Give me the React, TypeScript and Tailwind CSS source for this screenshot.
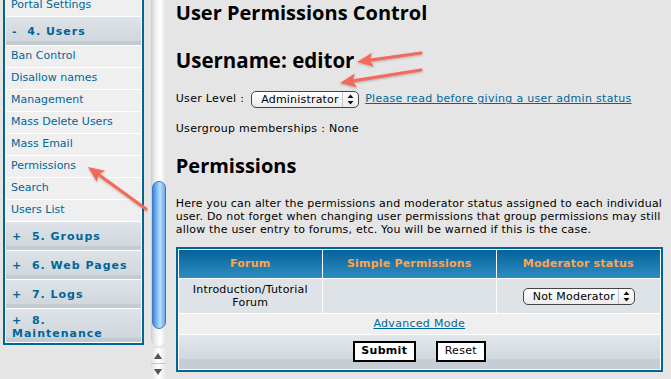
import React from "react";

const body = { fontFamily: '"DejaVu Sans", Verdana, sans-serif' };
const head = { fontFamily: '"Open Sans", "DejaVu Sans", sans-serif' };

function SideLink({ children }: { children: React.ReactNode }) {
  return (
    <div className="flex h-[21px] items-center bg-[#efefef] pl-[5px] text-[11px] text-[#006699]">
      {children}
    </div>
  );
}

function SideHead({ children, tall }: { children: React.ReactNode; tall?: boolean }) {
  return (
    <div
      className={`flex ${tall ? "h-[33px] items-start pt-[5px]" : "h-[28px] items-center"} bg-[linear-gradient(to_bottom,#dde3e8_0%,#d0d7dd_86%,#c3cbd2_87%,#c3cbd2_100%)] pl-[6px] pr-[2px] text-[11px] font-bold leading-[13px] tracking-[1px] text-[#006699] whitespace-pre-wrap`}
    >
      {children}
    </div>
  );
}

function UpDown() {
  return (
    <svg width="7" height="11" viewBox="0 0 7 11">
      <path d="M3.5 0.5 L6.5 4 L0.5 4 Z" fill="#111" />
      <path d="M0.5 7 L6.5 7 L3.5 10.5 Z" fill="#111" />
    </svg>
  );
}

function FakeSelect({ label, className }: { label: string; className: string }) {
  return (
    <div
      className={`flex h-[17px] items-stretch rounded-[5px] border border-[#444] bg-[linear-gradient(to_bottom,#ffffff,#ececec)] ${className}`}
    >
      <span className="flex flex-1 items-center pl-[9px] text-[11px] leading-none tracking-[0.2px] text-black">{label}</span>
      <span className="flex w-[16px] items-center justify-center border-l border-[#c4c4c4]">
        <UpDown />
      </span>
    </div>
  );
}

function Arrow({ x1, y1, x2, y2 }: { x1: number; y1: number; x2: number; y2: number }) {
  const dx = x2 - x1;
  const dy = y2 - y1;
  const len = Math.sqrt(dx * dx + dy * dy);
  const ux = dx / len;
  const uy = dy / len;
  const hl = 16;
  const hw = 7;
  const bx = x2 - ux * hl;
  const by = y2 - uy * hl;
  const px = -uy;
  const py = ux;
  const pts = `${x2},${y2} ${bx + px * hw},${by + py * hw} ${bx + ux * 3},${by + uy * 3} ${bx - px * hw},${by - py * hw}`;
  return (
    <g>
      <line x1={x1} y1={y1} x2={bx + ux * 4} y2={by + uy * 4} stroke="#f36b5d" strokeWidth="3.2" strokeLinecap="round" />
      <polygon points={pts} fill="#f36b5d" />
    </g>
  );
}

export default function App() {
  return (
    <div className="relative h-[379px] w-[671px] overflow-hidden bg-[#e5e5e5] text-black" style={body}>
      <div className="flex h-full">
        {/* Sidebar */}
        <div className="h-full w-[147px] overflow-hidden pl-[3px]">
          <div className="-mt-[8px] w-[141px] border-2 border-[#006699] bg-white p-px">
            <div className="flex flex-col gap-px">
              <SideLink>Portal Settings</SideLink>
              <SideHead>{"-  4. Users"}</SideHead>
              <SideLink>Ban Control</SideLink>
              <SideLink>Disallow names</SideLink>
              <SideLink>Management</SideLink>
              <SideLink>Mass Delete Users</SideLink>
              <SideLink>Mass Email</SideLink>
              <SideLink>Permissions</SideLink>
              <SideLink>Search</SideLink>
              <SideLink>Users List</SideLink>
              <SideHead>{"+  5. Groups"}</SideHead>
              <SideHead>{"+  6. Web Pages"}</SideHead>
              <SideHead>{"+  7. Logs"}</SideHead>
              <SideHead tall>{"+  8.\nMaintenance"}</SideHead>
            </div>
          </div>
        </div>

        {/* Scrollbar */}
        <div className="ml-[4px] flex h-full w-[15px] flex-col">
          <div className="relative h-[346px] w-full rounded-b-[8px] bg-[linear-gradient(to_right,#cfcfcf,#efefef_30%,#ffffff_60%,#e2e2e2)]">
            <div className="absolute left-[1px] right-0 top-[181px] h-[148px] rounded-full border border-[#3b78c4] bg-[linear-gradient(to_right,#3f86d8,#8ec6f6_40%,#b8defc_60%,#6aa9e8)]" />
          </div>
          <div className="mt-[2px] flex h-[16px] items-center justify-center border-b border-[#c8c8c8] bg-[linear-gradient(to_right,#e0e0e0,#ffffff,#e6e6e6)]">
            <svg width="8" height="6" viewBox="0 0 8 6"><path d="M4 0 L8 6 L0 6 Z" fill="#555" /></svg>
          </div>
          <div className="flex h-[15px] items-center justify-center bg-[linear-gradient(to_right,#e0e0e0,#ffffff,#e6e6e6)]">
            <svg width="8" height="6" viewBox="0 0 8 6"><path d="M0 0 L8 0 L4 6 Z" fill="#555" /></svg>
          </div>
        </div>

        {/* Main */}
        <div className="ml-[10px] flex w-[496px] flex-col">
          <h1 className="text-[20px] font-bold leading-[26px]" style={head}>
            User Permissions Control
          </h1>
          <h2 className="mt-[22px] text-[20.5px] font-bold leading-[24px]" style={head}>
            Username: editor
          </h2>
          <div className="mt-[19px] flex h-[17px] items-center text-[11px] tracking-[0.3px]">
            <span>User Level :</span>
            <FakeSelect label="Administrator" className="ml-[7px] w-[108px]" />
            <a className="ml-[6px] text-[#006699] underline">Please read before giving a user admin status</a>
          </div>
          <div className="mt-[14px] text-[11px] leading-[14px] tracking-[0.3px]">Usergroup memberships : None</div>
          <h2 className="mt-[18px] text-[20px] font-bold leading-[24px]" style={head}>
            Permissions
          </h2>
          <p className="mt-[19px] text-[11px] leading-[13px] tracking-[0.2px]">
            Here you can alter the permissions and moderator status assigned to each individual user. Do not forget when changing user permissions that group permissions may still allow the user entry to forums, etc. You will be warned if this is the case.
          </p>

          {/* Table */}
          <div className="mt-[11px] w-[487px] border-2 border-[#006699] bg-white p-px">
            <div className="grid grid-cols-[143px_173px_163px] gap-px">
              {["Forum", "Simple Permissions", "Moderator status"].map((t) => (
                <div
                  key={t}
                  className="flex h-[28px] items-center justify-center bg-[linear-gradient(to_bottom,#05639b,#2d8dbf)] text-[11px] font-bold tracking-[0.2px] text-[#ffa34f]"
                >
                  {t}
                </div>
              ))}
              <div className="flex h-[34px] items-center justify-center bg-[#dee3e7] text-center text-[11px] leading-[13px] tracking-[0.2px]">
                Introduction/Tutorial
                <br />
                Forum
              </div>
              <div className="bg-[#dee3e7]" />
              <div className="flex items-center justify-center bg-[#dee3e7]">
                <FakeSelect label="Not Moderator" className="ml-[1px] w-[112px]" />
              </div>
              <div className="col-span-3 flex h-[20px] items-center justify-center bg-[#efefef] text-[11px] tracking-[0.3px]">
                <a className="text-[#006699] underline">Advanced Mode</a>
              </div>
              <div className="col-span-3 flex h-[34px] items-start justify-center gap-[20px] bg-[linear-gradient(to_bottom,#e2e7eb_0%,#d1d8de_70%,#c6cdd4_71%,#c6cdd4_100%)] pt-[6px]">
                <button className="h-[21px] w-[63px] border-2 border-black bg-white text-[11px] font-bold tracking-[0.3px]">Submit</button>
                <button className="h-[21px] w-[50px] border-2 border-black bg-white text-[11px] tracking-[0.3px]">Reset</button>
              </div>
            </div>
          </div>
        </div>
      </div>

      <svg className="pointer-events-none absolute left-0 top-0" width="671" height="379">
        <defs>
          <filter id="sh" x="-20%" y="-20%" width="140%" height="140%">
            <feDropShadow dx="0" dy="1" stdDeviation="1" floodColor="#000" floodOpacity="0.25" />
          </filter>
        </defs>
        <g filter="url(#sh)">
          <Arrow x1={421} y1={53} x2={357} y2={62} />
          <Arrow x1={421} y1={70} x2={340} y2={83} />
          <Arrow x1={146} y1={209} x2={88} y2={167} />
        </g>
      </svg>
    </div>
  );
}
